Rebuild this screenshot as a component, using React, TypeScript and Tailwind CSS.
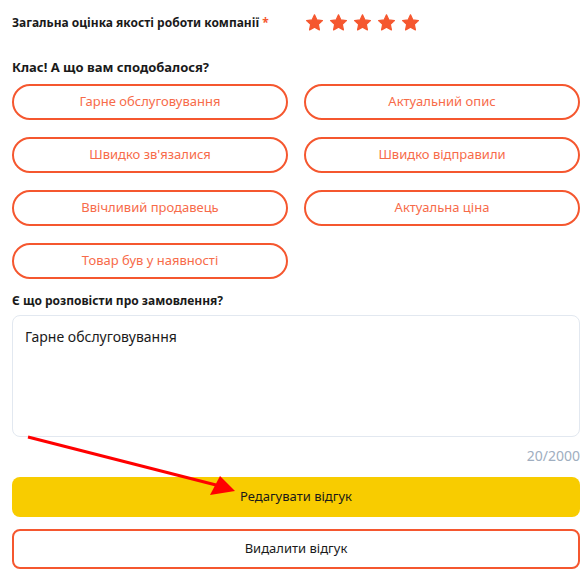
import React from "react";

const chips = [
  "Гарне обслуговування",
  "Актуальний опис",
  "Швидко зв'язалися",
  "Швидко відправили",
  "Ввічливий продавець",
  "Актуальна ціна",
  "Товар був у наявності",
];

function Star() {
  return (
    <svg width="21" height="20" viewBox="0 0 24 24" className="text-[#f5572f]">
      <path
        fill="currentColor"
        stroke="currentColor"
        strokeWidth="1.5"
        strokeLinejoin="round"
        d="M12 2.2l2.9 6.1 6.6.8-4.9 4.6 1.3 6.6L12 17l-5.9 3.3 1.3-6.6-4.9-4.6 6.6-.8z"
      />
    </svg>
  );
}

export default function App() {
  return (
    <div className="relative w-[587px] h-[575px] bg-white pl-3 pr-[7px] font-['Noto_Sans',sans-serif] text-[#1a1a1a]">
      {/* Rating */}
      <div className="flex items-center h-[46px]">
        <p className="w-[292px] text-[12px] font-bold">
          Загальна оцінка якості роботи компанії <span className="text-[#f5572f]">*</span>
        </p>
        <div className="flex gap-[3px]">
          <Star />
          <Star />
          <Star />
          <Star />
          <Star />
        </div>
      </div>

      {/* Likes */}
      <h3 className="mt-[12px] text-[13px] font-bold leading-[18px]">Клас! А що вам сподобалося?</h3>
      <div className="mt-[8px] grid grid-cols-2 gap-x-4 gap-y-[17px]">
        {chips.map((c) => (
          <button
            key={c}
            className="h-[36px] rounded-full border-2 border-[#f5572f] text-[13px] text-[#f76b4a]"
          >
            {c}
          </button>
        ))}
      </div>

      {/* Comment */}
      <h3 className="mt-[14px] text-[12px] font-bold leading-[16px]">Є що розповісти про замовлення?</h3>
      <div className="mt-[6px] h-[122px] rounded-lg border border-[#e2e8f0] px-3 pt-[10px] text-[14px]">
        Гарне обслуговування
      </div>
      <p className="mt-[8px] text-right text-[14px] text-[#a0aec0]">20/2000</p>

      {/* Actions */}
      <button className="mt-[11px] w-full h-[40px] rounded-lg bg-[#f8cc00] text-[13px]">
        Редагувати відгук
      </button>
      <button className="mt-[12px] w-full h-[40px] rounded-lg border-2 border-[#f5572f] bg-white text-[13px]">
        Видалити відгук
      </button>

      {/* Annotation arrow */}
      <svg className="absolute left-0 top-0 pointer-events-none" width="587" height="575">
        <line x1="28" y1="437" x2="216" y2="485" stroke="#ff0000" strokeWidth="3" />
        <polygon points="235,491 210,495 220,476" fill="#ff0000" />
      </svg>
    </div>
  );
}
